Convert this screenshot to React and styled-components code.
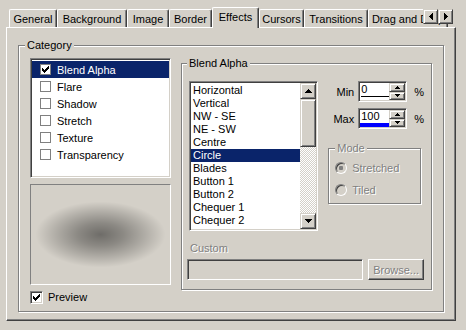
import React from 'react';
import styled, { createGlobalStyle, css } from 'styled-components';

const face = '#d4d0c8';
const light = '#ffffff';
const shadow = '#808080';
const dark = '#404040';
const select = '#0a246a';

const GlobalStyle = createGlobalStyle`
  html, body {
    margin: 0;
    padding: 0;
    background: ${face};
  }
  body {
    font-family: "Liberation Sans", Arial, sans-serif;
    font-size: 11px;
    color: #000;
  }
  * {
    box-sizing: border-box;
  }
`;

const sunken = css`
  border: 1px solid;
  border-color: ${shadow} ${light} ${light} ${shadow};
  box-shadow: inset 1px 1px ${dark}, inset -1px -1px ${face};
`;

const raised = css`
  border: 1px solid;
  border-color: ${face} ${dark} ${dark} ${face};
  box-shadow: inset 1px 1px ${light}, inset -1px -1px ${shadow};
`;

const pushed = css`
  border: 1px solid;
  border-color: ${light} ${dark} ${dark} ${light};
  box-shadow: inset -1px -1px ${shadow};
`;

const disabledText = css`
  color: ${shadow};
  text-shadow: 1px 1px 0 ${light};
`;

// pixel drawings
const CHECK = ['......#', '.....##', '#...###', '##.###.', '#####..', '.###...', '..#....'];
const UP = ['...#...', '..###..', '.#####.', '#######'];
const DOWN = [...UP].reverse();
const SMALL_UP = ['..#..', '.###.', '#####'];
const SMALL_DOWN = [...SMALL_UP].reverse();
const LEFT = ['...#', '..##', '.###', '####', '.###', '..##', '...#'];
const RIGHT = LEFT.map((r) => [...r].reverse().join(''));

const Pixels = ({ rows, color = '#000' }) => (
  <svg width={rows[0].length} height={rows.length} shapeRendering="crispEdges" style={{ display: 'block' }}>
    {rows.flatMap((r, y) =>
      [...r].map((c, x) =>
        c === '#' ? <rect key={x + '-' + y} x={x} y={y} width="1" height="1" fill={color} /> : null
      )
    )}
  </svg>
);

const Window = styled.div`
  width: 466px;
  height: 330px;
  padding: 7px 10px 9px 6px;
  display: flex;
  flex-direction: column;
  background: ${face};
`;

const TabStrip = styled.div`
  position: relative;
  z-index: 1;
  height: 21px;
  margin-bottom: -1px;
  padding-left: 3px;
  display: flex;
  align-items: flex-end;
  overflow: hidden;
`;

const Tab = styled.div`
  flex: none;
  width: ${(p) => p.$w}px;
  height: ${(p) => (p.$active ? 21 : 18)}px;
  margin-bottom: ${(p) => (p.$active ? 0 : 1)}px;
  padding-top: 3px;
  line-height: 13px;
  text-align: center;
  white-space: nowrap;
  overflow: hidden;
  background: ${face};
  border-top: 1px solid ${light};
  border-left: 1px solid ${light};
  border-right: 1px solid ${dark};
  border-radius: 2px 2px 0 0;
  box-shadow: inset -1px 0 ${shadow};
`;

const TabScroller = styled.div`
  position: absolute;
  right: 3px;
  top: 2px;
  display: flex;
  background: ${face};
`;

const ArrowButton = styled.div`
  ${raised};
  width: ${(p) => p.$w || 15}px;
  height: ${(p) => p.$h || 15}px;
  display: flex;
  align-items: center;
  justify-content: center;
  background: ${face};
`;

const Panel = styled.div`
  flex: 1;
  display: flex;
  padding: 17px 11px 8px 11px;
  border: 1px solid;
  border-color: ${light} ${dark} ${dark} ${light};
  box-shadow: inset -1px -1px ${shadow};
`;

const Group = styled.div`
  display: flex;
  flex-direction: column;
  border: 1px solid ${shadow};
  box-shadow: inset 1px 1px ${light}, 1px 1px ${light};
`;

const CategoryGroup = styled(Group)`
  flex: 1;
  padding: 0 11px 0 11px;
`;

const BlendGroup = styled(Group)`
  width: 251px;
  margin-top: 5px;
  padding: 0 7px 9px 7px;
`;

const ModeGroup = styled(Group)`
  width: 93px;
  margin-top: 19px;
  padding: 0 6px 7px 6px;
`;

const GroupTitle = styled.div`
  width: fit-content;
  margin: -7px 0 0 ${(p) => p.$x}px;
  padding: 0 2px;
  line-height: 13px;
  background: ${face};
  ${(p) => p.$disabled && disabledText};
`;

const CategoryBody = styled.div`
  display: flex;
  align-items: flex-start;
  gap: 10px;
  margin-top: 6px;
`;

const LeftColumn = styled.div`
  width: 141px;
  display: flex;
  flex-direction: column;
`;

const CategoryList = styled.div`
  ${sunken};
  height: 120px;
  padding: 2px 1px 1px 1px;
  background: #fff;
`;

const CategoryRow = styled.div`
  height: 17px;
  display: flex;
  align-items: center;
  gap: 6px;
  padding-left: 8px;
  background: ${(p) => (p.$selected ? select : 'transparent')};
  color: ${(p) => (p.$selected ? '#fff' : '#000')};
`;

const FlatCheck = styled.span`
  flex: none;
  width: 11px;
  height: 11px;
  display: flex;
  align-items: center;
  justify-content: center;
  border: 1px solid ${shadow};
  background: #fff;
`;

const PreviewBox = styled.div`
  height: 101px;
  margin-top: 6px;
  border: 1px solid;
  border-color: ${shadow} ${light} ${light} ${shadow};
  background: radial-gradient(
    ellipse 65px 33px at 50% 50%,
    rgba(0, 0, 0, 0.48) 0%,
    rgba(0, 0, 0, 0.34) 35%,
    rgba(0, 0, 0, 0.16) 70%,
    rgba(0, 0, 0, 0) 100%
  ), ${face};
`;

const PreviewRow = styled.div`
  display: flex;
  align-items: center;
  gap: 5px;
  margin-top: 6px;
  line-height: 13px;
`;

const Check3D = styled.span`
  ${sunken};
  flex: none;
  width: 13px;
  height: 13px;
  display: flex;
  align-items: center;
  justify-content: center;
  background: #fff;
`;

const TopRow = styled.div`
  display: flex;
  align-items: flex-start;
  margin-top: 11px;
`;

const ListBox = styled.div`
  ${sunken};
  width: 132px;
  height: 150px;
  padding: 1px;
  display: flex;
  background: #fff;
`;

const Items = styled.div`
  flex: 1;
  overflow: hidden;
  padding-top: 1px;
`;

const Item = styled.div`
  height: 13px;
  line-height: 13px;
  padding-left: 2px;
  white-space: nowrap;
  background: ${(p) => (p.$selected ? select : 'transparent')};
  color: ${(p) => (p.$selected ? '#fff' : '#000')};
`;

const ScrollBar = styled.div`
  width: 16px;
  display: flex;
  flex-direction: column;
  background: repeating-conic-gradient(${light} 0 25%, ${face} 0 50%) 0 0 / 2px 2px;
`;

const Track = styled.div`
  flex: 1;
`;

const Thumb = styled.div`
  ${raised};
  height: 48px;
  background: ${face};
`;

const SideColumn = styled.div`
  margin-left: 10px;
  display: flex;
  flex-direction: column;
`;

const SpinRow = styled.div`
  display: flex;
  align-items: center;
  margin-top: ${(p) => p.$gap || 0}px;
`;

const SpinLabel = styled.span`
  width: 26px;
  text-align: right;
  margin-right: 4px;
`;

const SpinEdit = styled.div`
  ${sunken};
  width: 49px;
  height: 21px;
  padding: 1px;
  display: flex;
  background: #fff;
`;

const EditText = styled.div`
  flex: 1;
  padding-left: 1px;
  box-shadow: ${(p) => (p.$bar ? 'inset 0 -4px #0000ff' : 'none')};
`;

const Value = styled.div`
  line-height: 13px;
  border-bottom: ${(p) => (p.$line ? '1px solid #000' : '0')};
`;

const SpinButtons = styled.div`
  width: 16px;
  display: flex;
  flex-direction: column;
`;

const SpinButton = styled.div`
  ${raised};
  flex: 1;
  display: flex;
  align-items: center;
  justify-content: center;
  background: ${face};
`;

const Percent = styled.span`
  margin-left: 7px;
`;

const RadioRow = styled.div`
  display: flex;
  align-items: center;
  gap: 5px;
  height: 13px;
  margin-top: ${(p) => p.$gap}px;
`;

const Radio = styled.span`
  flex: none;
  width: 12px;
  height: 12px;
  border-radius: 50%;
  border: 1px solid;
  border-color: ${shadow} ${light} ${light} ${shadow};
  box-shadow: inset 1px 1px ${dark}, inset -1px -1px ${face};
  background: ${face};
  display: flex;
  align-items: center;
  justify-content: center;
`;

const RadioDot = styled.span`
  width: 4px;
  height: 4px;
  border-radius: 1px;
  background: ${shadow};
`;

const DisabledLabel = styled.span`
  ${disabledText};
`;

const CustomLabel = styled.div`
  margin-top: 11px;
  padding-left: 1px;
  line-height: 13px;
  ${disabledText};
`;

const CustomRow = styled.div`
  display: flex;
  margin-top: 4px;
  margin-left: -2px;
`;

const TextBox = styled.div`
  ${sunken};
  width: 180px;
  height: 21px;
  background: ${face};
`;

const Button = styled.div`
  ${pushed};
  width: 57px;
  height: 21px;
  margin-left: 5px;
  display: flex;
  align-items: center;
  justify-content: center;
  background: ${face};
  ${disabledText};
`;

const tabs = [
  ['General', 48],
  ['Background', 70],
  ['Image', 42],
  ['Border', 43],
  ['Effects', 47, true],
  ['Cursors', 45],
  ['Transitions', 64],
  ['Drag and Drop', 80],
];

const categories = ['Blend Alpha', 'Flare', 'Shadow', 'Stretch', 'Texture', 'Transparency'];

const blends = [
  'Horizontal', 'Vertical', 'NW - SE', 'NE - SW', 'Centre', 'Circle', 'Blades',
  'Button 1', 'Button 2', 'Chequer 1', 'Chequer 2', 'Circle 2',
];

const Spin = ({ label, value, gap, mode }) => (
  <SpinRow $gap={gap}>
    <SpinLabel>{label}</SpinLabel>
    <SpinEdit>
      <EditText $bar={mode === 'bar'}>
        <Value $line={mode === 'line'}>{value}</Value>
      </EditText>
      <SpinButtons>
        <SpinButton><Pixels rows={SMALL_UP} /></SpinButton>
        <SpinButton><Pixels rows={SMALL_DOWN} /></SpinButton>
      </SpinButtons>
    </SpinEdit>
    <Percent>%</Percent>
  </SpinRow>
);

export default function App() {
  return (
    <Window>
      <GlobalStyle />
      <TabStrip>
        {tabs.map(([name, w, active]) => (
          <Tab key={name} $w={w} $active={active}>{name}</Tab>
        ))}
        <TabScroller>
          <ArrowButton><Pixels rows={LEFT} /></ArrowButton>
          <ArrowButton><Pixels rows={RIGHT} /></ArrowButton>
        </TabScroller>
      </TabStrip>
      <Panel>
        <CategoryGroup>
          <GroupTitle $x={-5}>Category</GroupTitle>
          <CategoryBody>
            <LeftColumn>
              <CategoryList>
                {categories.map((c, i) => (
                  <CategoryRow key={c} $selected={i === 0}>
                    <FlatCheck>{i === 0 && <Pixels rows={CHECK} />}</FlatCheck>
                    {c}
                  </CategoryRow>
                ))}
              </CategoryList>
              <PreviewBox />
              <PreviewRow>
                <Check3D><Pixels rows={CHECK} /></Check3D>
                Preview
              </PreviewRow>
            </LeftColumn>
            <BlendGroup>
              <GroupTitle $x={-2}>Blend Alpha</GroupTitle>
              <TopRow>
                <ListBox>
                  <Items>
                    {blends.map((b) => (
                      <Item key={b} $selected={b === 'Circle'}>{b}</Item>
                    ))}
                  </Items>
                  <ScrollBar>
                    <ArrowButton $w={16} $h={16}><Pixels rows={UP} /></ArrowButton>
                    <Thumb />
                    <Track />
                    <ArrowButton $w={16} $h={16}><Pixels rows={DOWN} /></ArrowButton>
                  </ScrollBar>
                </ListBox>
                <SideColumn>
                  <Spin label="Min" value="0" mode="line" />
                  <Spin label="Max" value="100" mode="bar" gap={6} />
                  <ModeGroup>
                    <GroupTitle $x={0} $disabled>Mode</GroupTitle>
                    <RadioRow $gap={6}>
                      <Radio><RadioDot /></Radio>
                      <DisabledLabel>Stretched</DisabledLabel>
                    </RadioRow>
                    <RadioRow $gap={9}>
                      <Radio />
                      <DisabledLabel>Tiled</DisabledLabel>
                    </RadioRow>
                  </ModeGroup>
                </SideColumn>
              </TopRow>
              <CustomLabel>Custom</CustomLabel>
              <CustomRow>
                <TextBox />
                <Button>Browse...</Button>
              </CustomRow>
            </BlendGroup>
          </CategoryBody>
        </CategoryGroup>
      </Panel>
    </Window>
  );
}
